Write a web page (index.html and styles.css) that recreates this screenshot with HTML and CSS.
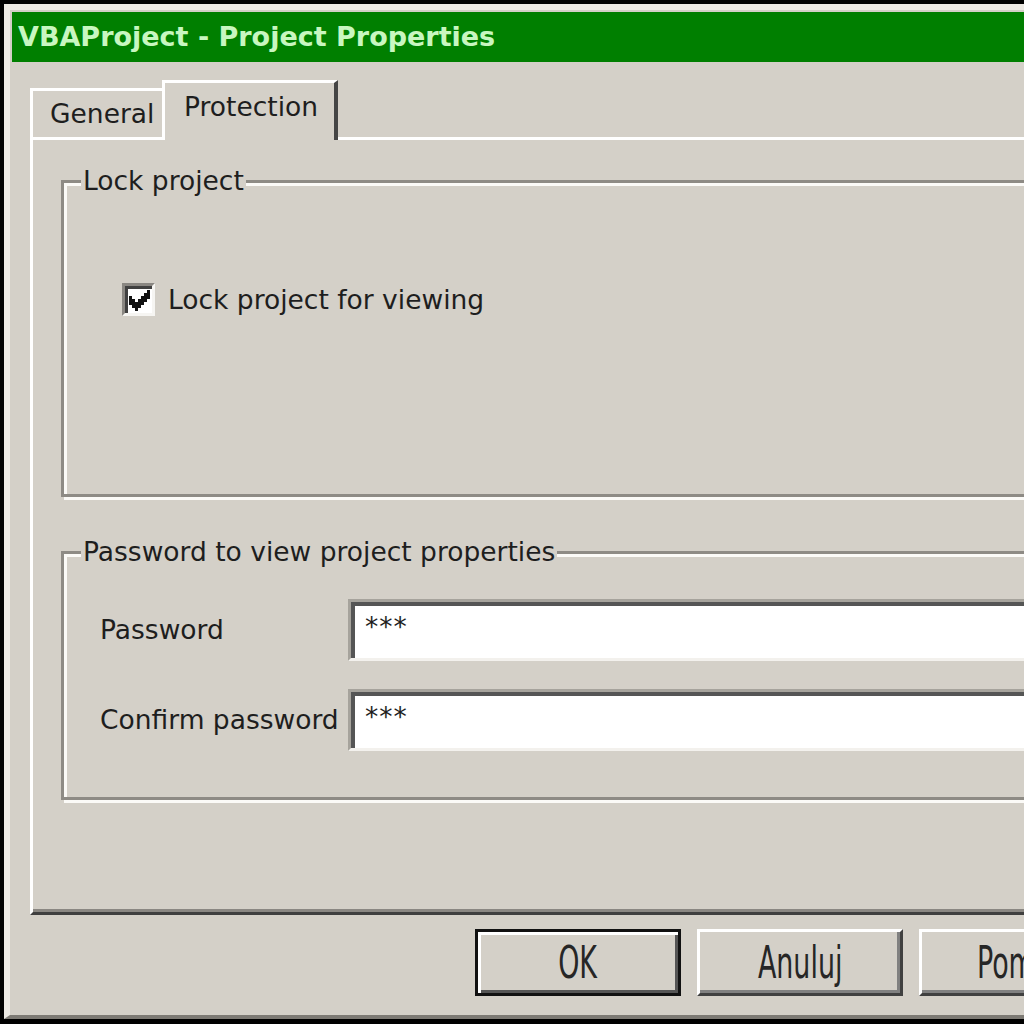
FILE: index.html
```html
<!DOCTYPE html>
<html lang="en">
<head>
<meta charset="utf-8">
<title>VBAProject - Project Properties</title>
<link rel="stylesheet" href="styles.css">
</head>
<body>
<div class="window">
  <div class="titlebar">VBAProject - Project Properties</div>
  <div class="main">
    <div class="tabs">
      <div class="tab tab-general">General</div>
      <div class="tab tab-active">Protection</div>
    </div>
    <div class="panel">
      <fieldset class="group g1">
        <legend>Lock project</legend>
        <label class="check">
          <span class="box">
            <svg width="21" height="21" viewBox="0 0 7 7" aria-hidden="true"><path fill="#111" d="M6 0h1v1h-1z M5 1h2v1h-2z M0 2h1v1h-1z M4 2h3v1h-3z M0 3h2v1h-2z M3 3h3v1h-3z M0 4h5v1h-5z M1 5h3v1h-3z M2 6h1v1h-1z"/></svg>
          </span>
          <span>Lock project for viewing</span>
        </label>
      </fieldset>
      <fieldset class="group g2">
        <legend>Password to view project properties</legend>
        <div class="form">
          <span class="lbl">Password</span>
          <div class="field">***</div>
          <span class="lbl">Confirm password</span>
          <div class="field">***</div>
        </div>
      </fieldset>
    </div>
  </div>
  <div class="buttons">
    <div class="btn default"><span>OK</span></div>
    <div class="btn"><span>Anuluj</span></div>
    <div class="btn"><span>Pomoc</span></div>
  </div>
</div>
</body>
</html>
```
FILE: styles.css
```css
* { box-sizing: border-box; }
html, body { margin: 0; }
body {
  background: #000;
  width: 1024px;
  height: 1024px;
  overflow: hidden;
  font-family: "DejaVu Sans", Verdana, sans-serif;
  font-size: 26.5px;
  color: #1e1e1e;
}
.window {
  margin: 4px 0 0 4px;
  width: 1100px;
  height: 1015px;
  background: #d4d0c8;
  border-top: 6px solid #ece9e3;
  border-left: 6px solid #ece9e3;
  border-bottom: 4px solid #7d7a74;
  padding: 2px 0 0 2px;
}
.titlebar {
  height: 50px;
  background: #007f00;
  color: #c8f7c0;
  font-weight: bold;
  font-size: 27px;
  line-height: 50px;
  padding-left: 6px;
  white-space: nowrap;
}
.main { padding: 18px 0 0 18px; }
.tabs {
  display: flex;
  align-items: flex-end;
  height: 60px;
  margin-bottom: -3px;
  position: relative;
  z-index: 1;
}
.tab {
  background: #d4d0c8;
  border-top: 3px solid #fff;
  border-left: 3px solid #fff;
  line-height: 30px;
  white-space: nowrap;
}
.tab-general {
  width: 135px;
  height: 49px;
  margin-bottom: 3px;
  padding: 8px 0 0 17px;
}
.tab-active {
  width: 176px;
  height: 60px;
  margin-left: -3px;
  border-right: 4px solid #454545;
  padding: 9px 0 0 19px;
}
.panel {
  height: 778px;
  background: #d4d0c8;
  border-top: 3px solid #fff;
  border-left: 3px solid #fff;
  border-bottom: 3px solid #3f3f3f;
  box-shadow: inset 0 -3px 0 #8a8782;
  padding: 26px 0 0 28px;
}
.group {
  margin: 0;
  min-width: 0;
  border: 3px solid #8e8b85;
  box-shadow: inset 3px 3px 0 #fbfaf7, 3px 3px 0 #fbfaf7;
}
.group legend {
  padding: 0 2px;
  line-height: 30px;
  background: #d4d0c8;
  white-space: nowrap;
}
.g1 { padding: 87px 0 178px 17px; }
.g2 { margin-top: 40px; padding: 32px 0 46px 17px; }
.check {
  display: flex;
  align-items: center;
  gap: 13px;
  height: 33px;
  margin-left: 41px;
  line-height: 30px;
}
.box {
  width: 33px;
  height: 33px;
  flex: none;
  background: #fff;
  border-top: 3px solid #8a8782;
  border-left: 3px solid #8a8782;
  border-right: 3px solid #f6f5f2;
  border-bottom: 3px solid #f6f5f2;
  box-shadow: inset 3px 3px 0 #404040;
  display: flex;
  align-items: center;
  justify-content: center;
  padding: 2px 0 0 2px;
}
.box svg { display: block; }
.form {
  display: grid;
  grid-template-columns: 248px 1fr;
  grid-auto-rows: 62px;
  row-gap: 28px;
  margin-left: 19px;
}
.lbl { align-self: center; line-height: 30px; white-space: nowrap; }
.field {
  background: #fff;
  border-top: 3px solid #a6a39c;
  border-left: 3px solid #a6a39c;
  border-bottom: 3px solid #f3f1ed;
  box-shadow: inset 4px 4px 0 #555;
  padding: 10px 0 0 14px;
  line-height: 30px;
  letter-spacing: 1px;
}
.buttons {
  display: flex;
  gap: 16px;
  padding-left: 463px;
  margin-top: 14px;
}
.btn {
  width: 206px;
  height: 67px;
  flex: none;
  background: #d4d0c8;
  border-top: 3px solid #fff;
  border-left: 3px solid #fff;
  border-right: 3px solid #404040;
  border-bottom: 3px solid #404040;
  box-shadow: inset -3px -3px 0 #808080;
  display: flex;
  align-items: center;
  justify-content: center;
  font-family: "DejaVu Sans Condensed", "DejaVu Sans", sans-serif;
  font-size: 44px;
  color: #262626;
}
.btn span { display: inline-block; transform: scaleX(0.68); white-space: nowrap; }
.btn.default {
  border: 3px solid #111;
  box-shadow: inset 3px 3px 0 #fff, inset -3px -3px 0 #555;
}
```
